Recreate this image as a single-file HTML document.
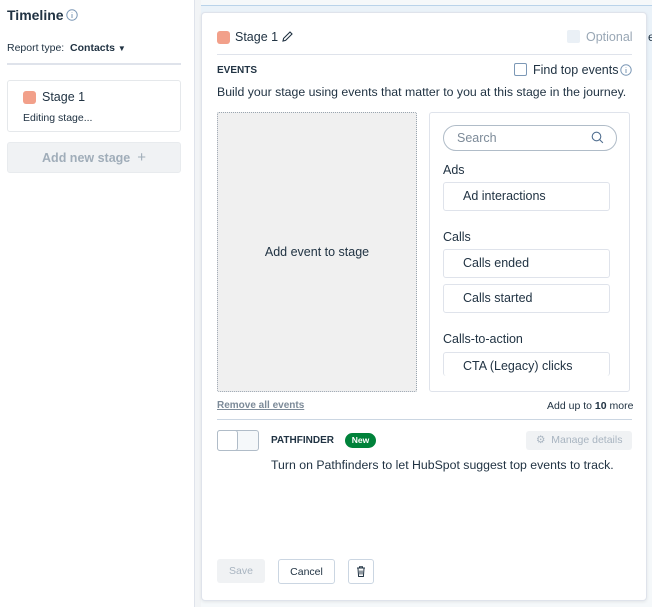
<!DOCTYPE html>
<html><head><meta charset="utf-8"><style>
*{box-sizing:border-box;margin:0;padding:0}
body{width:652px;height:607px;overflow:hidden;font-family:"Liberation Sans",sans-serif;color:#213343;background:#fff;position:relative;font-size:12.5px}
.abs{position:absolute}
.left{left:0;top:0;width:194px;height:607px;background:#fff}
.sep{left:194px;top:0;width:7px;height:607px;background:#f2f4f6;border-left:1px solid #dfe3eb}
.rightbg{left:201px;top:0;width:451px;height:607px;background:#f5f8fa}
.band{left:201px;top:5px;width:451px;height:75px;background:#eaf2f9;border-top:1px solid #b9d3ea}
.card{left:201px;top:12px;width:446px;height:589px;background:#fff;border:1px solid #dfe3eb;border-radius:4px;box-shadow:0 1px 3px rgba(0,0,0,.08)}
.sq{width:13px;height:13px;background:#f2a08a;border-radius:3px;position:absolute}
.btn{position:absolute;border:1px solid #cbd6e2;border-radius:3px;background:#fff}
.ev{position:absolute;left:443px;width:167px;height:29px;border:1px solid #dfe3eb;border-radius:3px;background:#fff;font-size:12.5px;padding:6px 0 0 19px;color:#213343}
.lab{position:absolute;left:443px;font-size:12.5px}
</style></head><body>
<div class="abs left"></div>
<div class="abs sep"></div>
<div class="abs rightbg"></div>
<div class="abs band"></div>
<div class="abs" style="left:648px;top:30px;font-size:12px">e</div>

<div class="abs" style="left:7px;top:7px;font-size:14px;font-weight:bold">Timeline</div>
<svg class="abs" style="left:66px;top:9px" width="12" height="12" viewBox="0 0 12 12"><circle cx="6" cy="6" r="5.2" fill="none" stroke="#7c98b6" stroke-width="1"/><path d="M6 5v4M6 3.2v.6" stroke="#7c98b6" stroke-width="1"/></svg>
<div class="abs" style="left:7px;top:42px;font-size:10.5px">Report type: &nbsp;<b>Contacts</b> <span style="font-size:8px">▼</span></div>
<div class="abs" style="left:7px;top:63px;width:174px;height:2px;background:#dfe3eb"></div>
<div class="abs" style="left:7px;top:80px;width:174px;height:52px;border:1px solid #e5e8eb;border-radius:3px;background:#fff"></div>
<div class="sq" style="left:23px;top:91px"></div>
<div class="abs" style="left:42px;top:90px;font-size:12.5px">Stage 1</div>
<div class="abs" style="left:23px;top:112px;font-size:10.5px">Editing stage...</div>
<div class="abs" style="left:7px;top:142px;width:174px;height:31px;background:#f0f2f4;border-radius:3px;border:1px solid #e8ebee;font-size:12.5px;font-weight:bold;color:#a0adb9;text-align:center;padding-top:8px">Add new stage &nbsp;<span style="font-weight:normal;font-size:15px;line-height:12px">+</span></div>

<div class="abs card"></div>
<div class="sq" style="left:217px;top:31px"></div>
<div class="abs" style="left:235px;top:30px;font-size:12.5px">Stage 1</div>
<svg class="abs" style="left:281px;top:30px" width="13" height="13" viewBox="0 0 13 13"><path d="M2 11l.6-2.6L9 2l2 2-6.4 6.4z" fill="none" stroke="#213343" stroke-width="1.1"/></svg>
<div class="abs" style="left:567px;top:30px;width:13px;height:13px;background:#eaf0f6;border-radius:2px"></div>
<div class="abs" style="left:586px;top:30px;font-size:12.5px;color:#99a7b5">Optional</div>
<div class="abs" style="left:217px;top:54px;width:415px;height:1px;background:#dfe3eb"></div>
<div class="abs" style="left:217px;top:65px;font-size:10px;font-weight:bold">EVENTS</div>
<div class="abs" style="left:514px;top:63px;width:13px;height:13px;border:1px solid #7c98b6;border-radius:2px"></div>
<div class="abs" style="left:533px;top:63px;font-size:12.5px">Find top events</div>
<svg class="abs" style="left:620px;top:64px" width="12" height="12" viewBox="0 0 12 12"><circle cx="6" cy="6" r="5.2" fill="none" stroke="#7c98b6" stroke-width="1"/><path d="M6 5v4M6 3.2v.6" stroke="#7c98b6" stroke-width="1"/></svg>
<div class="abs" style="left:217px;top:85px;font-size:12.3px">Build your stage using events that matter to you at this stage in the journey.</div>

<div class="abs" style="left:217px;top:112px;width:200px;height:280px;background:#f0f0f0;border:1px dotted #9aa5b0;border-radius:2px"></div>
<div class="abs" style="left:217px;top:245px;width:200px;text-align:center;font-size:12.5px">Add event to stage</div>

<div class="abs" style="left:429px;top:112px;width:201px;height:280px;border:1px solid #dfe3eb;border-radius:3px;background:#fff"></div>
<div class="abs" style="left:443px;top:125px;width:174px;height:26px;border:1px solid #b0bcc8;border-radius:13px;font-size:12.5px;color:#7c8a98;padding:5px 0 0 13px">Search</div>
<svg class="abs" style="left:591px;top:131px" width="13" height="13" viewBox="0 0 13 13"><circle cx="5.5" cy="5.5" r="4.3" fill="none" stroke="#516f90" stroke-width="1.1"/><path d="M8.6 8.6l3.3 3.3" stroke="#516f90" stroke-width="1.1"/></svg>
<div class="lab" style="top:163px">Ads</div>
<div class="ev" style="top:182px">Ad interactions</div>
<div class="lab" style="top:230px">Calls</div>
<div class="ev" style="top:249px">Calls ended</div>
<div class="ev" style="top:284px">Calls started</div>
<div class="lab" style="top:332px">Calls-to-action</div>
<div class="ev" style="top:352px;height:24px;border-bottom:none">CTA (Legacy) clicks</div>

<div class="abs" style="left:217px;top:400px;font-size:10px;font-weight:bold;color:#7c8a98;text-decoration:underline">Remove all events</div>
<div class="abs" style="left:547px;top:400px;font-size:10.5px">Add up to <b>10</b> more</div>
<div class="abs" style="left:217px;top:419px;width:415px;height:1px;background:#cbd6e2"></div>

<div class="abs" style="left:217px;top:430px;width:42px;height:21px;border:1px solid #b0bcc8;border-radius:3px;background:#f5f8fa"></div>
<div class="abs" style="left:217px;top:430px;width:21px;height:21px;border:1px solid #b0bcc8;border-radius:3px;background:#fff"></div>
<div class="abs" style="left:271px;top:435px;font-size:10px;font-weight:bold">PATHFINDER</div>
<div class="abs" style="left:345px;top:433px;width:31px;height:15px;background:#00823a;border-radius:8px;color:#fff;font-size:8.5px;font-weight:bold;text-align:center;padding-top:2px">New</div>
<div class="abs" style="left:526px;top:431px;width:106px;height:19px;background:#f0f2f4;border-radius:3px;font-size:10.5px;color:#a8b4c0;padding:3px 0 0 10px">⚙ &nbsp;Manage details</div>
<div class="abs" style="left:271px;top:458px;font-size:12.3px">Turn on Pathfinders to let HubSpot suggest top events to track.</div>

<div class="abs" style="left:217px;top:559px;width:48px;height:24px;background:#f0f2f4;border-radius:3px;font-size:10.5px;color:#a8b4c0;text-align:center;padding-top:6px">Save</div>
<div class="btn" style="left:278px;top:559px;width:57px;height:25px;font-size:10.5px;text-align:center;padding-top:6px">Cancel</div>
<div class="btn" style="left:348px;top:559px;width:26px;height:25px"></div>
<svg class="abs" style="left:355px;top:565px" width="12" height="13" viewBox="0 0 12 13"><path d="M2 3h8M4.5 3V1.8h3V3M3 3.5l.6 8h4.8l.6-8M5 5.5v4M7 5.5v4" fill="none" stroke="#213343" stroke-width="1"/></svg>
</body></html>
